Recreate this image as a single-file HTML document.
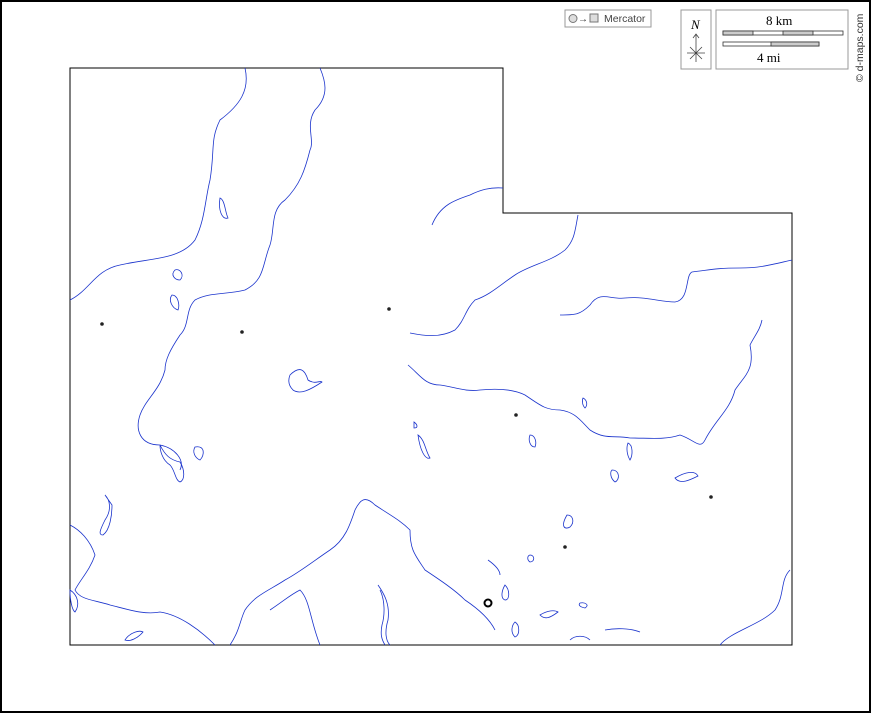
<!DOCTYPE html>
<html><head><meta charset="utf-8"><style>
html,body{margin:0;padding:0;background:#fff}
svg{display:block}
text{font-family:"Liberation Serif",serif}
</style></head><body>
<svg width="871" height="713" viewBox="0 0 871 713" xmlns="http://www.w3.org/2000/svg">
<rect x="1" y="1" width="869" height="711" fill="#fff" stroke="#000" stroke-width="2"/>
<!-- legend -->
<rect x="565" y="10" width="86" height="17" fill="#fff" stroke="#999"/>
<circle cx="573" cy="18.5" r="4" fill="#ddd" stroke="#777"/>
<text x="578" y="22" font-size="10" fill="#333" font-family="Liberation Sans,sans-serif">→</text>
<rect x="590" y="14" width="8" height="8" fill="#ddd" stroke="#777"/>
<text x="604" y="22" font-size="10.5" fill="#444" style="font-family:'Liberation Sans',sans-serif">Mercator</text>
<rect x="681" y="10" width="30" height="59" fill="#fff" stroke="#999"/>
<text x="691" y="29" font-size="13" font-style="italic">N</text>
<path d="M696 48V34M693 38l3-4 3 4M687 53h18M696 44v18M690 47l12 12M702 47l-12 12" stroke="#444" stroke-width="0.8" fill="none"/>
<rect x="716" y="10" width="132" height="59" fill="#fff" stroke="#999"/>
<text x="766" y="25" font-size="13">8 km</text>
<rect x="723" y="31" width="120" height="4" fill="#fff" stroke="#333" stroke-width="0.8"/>
<rect x="723" y="31" width="30" height="4" fill="#ccc" stroke="#333" stroke-width="0.8"/>
<rect x="783" y="31" width="30" height="4" fill="#ccc" stroke="#333" stroke-width="0.8"/>
<rect x="723" y="42" width="96" height="4" fill="#fff" stroke="#333" stroke-width="0.8"/>
<rect x="771" y="42" width="48" height="4" fill="#ccc" stroke="#333" stroke-width="0.8"/>
<text x="757" y="62" font-size="13">4 mi</text>
<text transform="translate(863,82) rotate(-90)" font-size="10.5" fill="#333" style="font-family:'Liberation Sans',sans-serif">© d-maps.com</text>
<!-- county outline -->
<path d="M70 68H503V213H792V645H70Z" fill="none" stroke="#000" stroke-width="1"/>
<g fill="none" stroke="#1a33cc" stroke-width="0.8">
<path d="M70 300C90 290 95 270 120 265C150 258 180 260 195 240C205 220 205 200 210 180C215 150 210 140 220 120C240 105 250 90 245 68"/>
<path d="M320 68C325 80 330 95 315 110C305 125 315 140 310 150C305 170 300 185 285 200C270 210 275 230 270 245C262 265 265 280 245 290C225 295 210 292 195 300C185 310 190 325 180 335C170 350 165 360 165 370C160 390 145 400 140 415C135 430 140 445 160 445C175 448 185 460 180 470"/>
<path d="M432 225C440 205 455 200 470 195C480 190 490 187 503 188"/>
<path d="M578 215C575 230 575 240 565 250C550 262 530 265 515 275C500 285 490 295 475 300C465 310 465 320 455 330C440 338 425 336 410 333"/>
<path d="M408 365C420 375 425 385 440 385C455 387 465 392 480 390C500 388 515 390 525 395C540 405 545 410 560 410C575 412 580 420 590 430C605 440 615 435 630 438C650 438 665 440 680 435C695 440 700 450 705 440C715 420 730 410 735 390C745 375 755 370 750 345C755 335 760 330 762 320"/>
<path d="M560 315C575 315 580 315 590 305C600 290 610 300 625 298C645 296 660 302 675 302C690 300 685 275 692 272C710 270 715 268 740 268C760 268 770 265 792 260"/>
<path d="M230 645C240 630 240 620 245 610C255 595 270 590 285 580C300 572 315 560 330 550C345 540 350 525 355 510C360 500 365 495 375 505C390 515 400 520 410 530C410 550 415 555 425 570C440 580 455 590 465 600C480 610 490 620 495 630"/>
<path d="M70 525C80 530 90 540 95 555C90 570 80 580 75 590C80 600 95 600 110 605C130 610 145 615 160 612C180 615 200 630 215 645"/>
<path d="M270 610C285 600 290 595 300 590C310 600 310 620 320 645"/>
<path d="M720 645C730 632 760 625 775 610C785 595 780 580 790 570"/>
<path d="M290 375C300 365 305 370 308 380C315 385 320 380 322 382C310 390 300 395 293 390C288 385 288 380 290 375Z"/>
<path d="M172 295C178 295 180 305 178 310C172 308 168 300 172 295Z"/>
<path d="M175 270C180 268 185 275 180 280C175 280 170 275 175 270Z"/>
<path d="M220 198C225 200 225 212 228 218C222 220 218 210 220 198Z"/>
<path d="M160 445C165 455 170 460 180 462C185 470 185 480 180 482C175 480 175 470 170 465C162 460 160 450 160 445Z"/>
<path d="M195 447C205 445 205 455 200 460C195 458 192 452 195 447Z"/>
<path d="M105 495C110 500 112 510 105 520C100 530 98 535 103 535C110 530 112 515 112 505Z"/>
<path d="M414 422C418 425 418 428 414 428Z"/>
<path d="M418 435C425 440 425 450 430 458C425 460 420 450 418 435Z"/>
<path d="M530 435C535 435 537 442 535 447C530 447 528 440 530 435Z"/>
<path d="M583 398C587 400 588 405 585 408C582 405 582 400 583 398Z"/>
<path d="M628 443C633 445 633 455 630 460C627 455 626 448 628 443Z"/>
<path d="M612 470C620 470 620 480 615 482C610 478 610 472 612 470Z"/>
<path d="M675 478C685 472 695 470 698 476C690 480 680 485 675 478Z"/>
<path d="M567 515C573 515 575 522 570 527C565 530 560 527 567 515Z"/>
<path d="M530 555C535 555 535 562 530 562C527 560 527 556 530 555Z"/>
<path d="M488 560C495 565 500 570 500 575"/>
<path d="M505 585C510 590 510 600 505 600C500 598 502 590 505 585Z"/>
<path d="M378 585C385 595 390 605 388 620C385 630 385 640 390 645"/>
<path d="M380 590C385 600 385 615 382 625C380 635 382 640 385 645"/>
<path d="M515 622C520 625 520 635 515 637C510 632 512 625 515 622Z"/>
<path d="M540 615C548 610 555 610 558 612C550 618 545 620 540 615Z"/>
<path d="M580 603C585 602 590 605 585 608C580 607 578 605 580 603Z"/>
<path d="M125 640C130 632 140 630 143 632C138 638 130 642 125 640Z"/>
<path d="M605 630C615 628 630 628 640 632"/>
<path d="M570 640C575 635 585 635 590 640"/>
<path d="M70 590C78 595 80 605 75 612C72 610 70 600 70 590Z"/>
</g>
<!-- places -->
<g fill="#222">
<circle cx="102" cy="324" r="1.8"/><circle cx="242" cy="332" r="1.8"/>
<circle cx="389" cy="309" r="1.8"/><circle cx="516" cy="415" r="1.8"/>
<circle cx="711" cy="497" r="1.8"/><circle cx="565" cy="547" r="1.8"/>
</g>
<circle cx="488" cy="603" r="3.5" fill="#fff" stroke="#000" stroke-width="2"/>
</svg>
</body></html>
